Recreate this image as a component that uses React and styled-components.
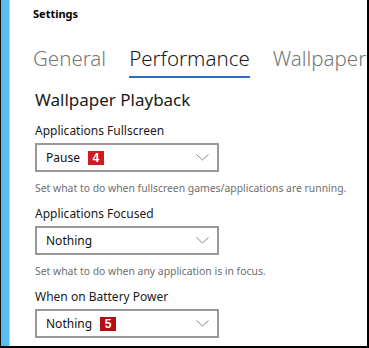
import styled, { createGlobalStyle } from "styled-components";

const GlobalStyle = createGlobalStyle`
  html, body {
    margin: 0;
    padding: 0;
    background: #ffffff;
  }
  body {
    font-family: "Noto Sans", "Open Sans", sans-serif;
  }
`;

const Frame = styled.div`
  width: 369px;
  height: 348px;
  box-sizing: border-box;
  display: flex;
  background: #ffffff;
  border-left: 1px solid #111;
  border-right: 2px solid #000;
  border-bottom: 2px solid #000;
  overflow: hidden;
`;

const Stripe = styled.div`
  width: 8px;
  flex: none;
  background: #5bbdee;
  border-right: 1px solid #a6dbf6;
`;

const Content = styled.div`
  flex: 1;
  min-width: 0;
  padding: 6px 0 0 23px;
  overflow: hidden;
`;

const Title = styled.div`
  font-size: 11px;
  font-weight: 700;
  line-height: 16px;
  color: #000;
`;

const Tabs = styled.div`
  display: flex;
  gap: 23px;
  margin-top: 23px;
  white-space: nowrap;
`;

const Tab = styled.div`
  font-size: 20.5px;
  font-weight: 300;
  line-height: 26px;
  padding-bottom: 5px;
  color: ${(p) => (p.$active ? "#1a1a1a" : "#777777")};
  border-bottom: 2px solid ${(p) => (p.$active ? "#2b6fbd" : "transparent")};
`;

const Section = styled.div`
  padding-left: 2px;
  margin-top: 11px;
`;

const Heading = styled.div`
  font-size: 17px;
  line-height: 22px;
  color: #1a1a1a;
  margin-bottom: 12px;
`;

const Label = styled.div`
  font-size: 12px;
  line-height: 16px;
  color: #1a1a1a;
  margin-bottom: 4px;
`;

const Select = styled.div`
  width: 184px;
  height: 29px;
  box-sizing: border-box;
  border: 2px solid #999999;
  display: flex;
  align-items: center;
  padding: 0 8px 0 9px;
  font-size: 12px;
  color: #111;
`;

const Value = styled.span`
  margin-right: 8px;
`;

const Badge = styled.span`
  display: inline-flex;
  align-items: center;
  justify-content: center;
  width: 16px;
  height: 14px;
  background: ${(p) => p.$color || "#c8161c"};
  color: #fff;
  font-family: "Liberation Sans", Arial, sans-serif;
  font-weight: 700;
  font-size: 12px;
`;

const Chevron = styled.svg`
  margin-left: auto;
  width: 13px;
  height: 7px;
`;

const Help = styled.div`
  font-size: 10.4px;
  line-height: 14px;
  color: #6e6e6e;
  margin: 9px 0 11px;
  white-space: nowrap;
`;

const Dropdown = ({ value, badge, badgeColor }) => (
  <Select>
    <Value>{value}</Value>
    {badge && <Badge $color={badgeColor}>{badge}</Badge>}
    <Chevron viewBox="0 0 13 7">
      <path d="M0.5 0.5 L6.5 6 L12.5 0.5" fill="none" stroke="#8a8a8a" strokeWidth="1" />
    </Chevron>
  </Select>
);

export default function App() {
  return (
    <>
      <GlobalStyle />
      <Frame>
        <Stripe />
        <Content>
          <Title>Settings</Title>
          <Tabs>
            <Tab>General</Tab>
            <Tab $active>Performance</Tab>
            <Tab>Wallpaper</Tab>
          </Tabs>
          <Section>
            <Heading>Wallpaper Playback</Heading>
            <Label>Applications Fullscreen</Label>
            <Dropdown value="Pause" badge="4" badgeColor="#d11a1f" />
            <Help>Set what to do when fullscreen games/applications are running.</Help>
            <Label>Applications Focused</Label>
            <Dropdown value="Nothing" />
            <Help>Set what to do when any application is in focus.</Help>
            <Label>When on Battery Power</Label>
            <Dropdown value="Nothing" badge="5" badgeColor="#b50f14" />
          </Section>
        </Content>
      </Frame>
    </>
  );
}
